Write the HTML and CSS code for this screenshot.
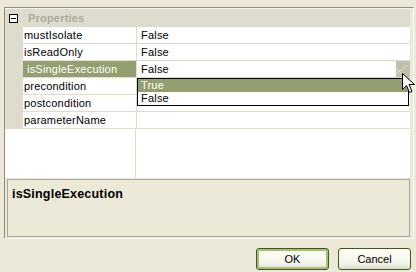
FILE: index.html
```html
<!DOCTYPE html>
<html lang="en">
<head>
    <meta charset="UTF-8">
    <title>Properties</title>
    <link rel="stylesheet" href="styles.css">
</head>
<body>

    <div class="frame">
        <div class="grid">
            <div class="category">
                <span class="expander"></span>
                <span class="category-name">Properties</span>
            </div>

            <div class="row">
                <div class="gutter"></div>
                <div class="name">mustIsolate</div>
                <div class="value">False</div>
            </div>
            <div class="row">
                <div class="gutter"></div>
                <div class="name">isReadOnly</div>
                <div class="value">False</div>
            </div>
            <div class="row selected">
                <div class="gutter"></div>
                <div class="name">isSingleExecution</div>
                <div class="value">
                    <span>False</span>
                    <span class="drop-button"></span>
                </div>
            </div>
            <div class="row">
                <div class="gutter"></div>
                <div class="name">precondition</div>
                <div class="value"></div>
            </div>
            <div class="row">
                <div class="gutter"></div>
                <div class="name">postcondition</div>
                <div class="value"></div>
            </div>
            <div class="row">
                <div class="gutter"></div>
                <div class="name">parameterName</div>
                <div class="value"></div>
            </div>
            <div class="filler">
                <div class="filler-left"></div>
                <div></div>
            </div>

            <!-- liste ouverte sous la valeur -->
            <div class="dropdown">
                <div class="option active">True</div>
                <div class="option">False</div>
            </div>
        </div>

        <div class="description">
            <strong>isSingleExecution</strong>
        </div>
    </div>

    <div class="buttons">
        <button class="btn default">OK</button>
        <button class="btn">Cancel</button>
    </div>

    <svg class="cursor" width="30" height="40" viewBox="0 0 30 40">
        <line x1="2" y1="2" x2="24" y2="24" stroke="#ffffff" stroke-opacity="0.45"/>
        <line x1="22" y1="-6" x2="-18" y2="26" stroke="#ffffff" stroke-opacity="0.45"/>
        <path d="M9.5 8.5 L9.5 24.5 L13.5 20.5 L16.5 27.5 L19 26.5 L16 19.5 L21.5 19.5 Z" fill="#ffffff" stroke="#000000" stroke-width="1"/>
    </svg>

</body>
</html>
```

FILE: styles.css
```css
/* Base */
* {
    margin: 0;
    padding: 0;
    box-sizing: border-box;
}

body {
    font-family: 'Liberation Sans', Arial, sans-serif;
    font-size: 11px;
    letter-spacing: 0.2px;
    color: #000;
    background-color: #ece9d8;
    position: relative;
    width: 416px;
    height: 272px;
    overflow: hidden;
}

/* Cadre de la grille */
.frame {
    margin: 7px 2px 0 4px;
    height: 232px;
    border-top: 1px solid #8d8b7c;
    border-left: 1px solid #8d8b7c;
    border-right: 1px solid #fff;
    border-bottom: 1px solid #fff;
    display: flex;
    flex-direction: column;
}

.grid {
    position: relative;
    height: 170px;
    margin-right: 3px;
    background-color: #fff;
    border-top: 1px solid #f4f3ee;
    display: flex;
    flex-direction: column;
}

.category {
    height: 18px;
    background-color: #dedccd;
    display: flex;
    align-items: center;
}

.expander {
    position: relative;
    width: 9px;
    height: 9px;
    margin-left: 4px;
    border: 1px solid #000;
    background-color: #fff;
}

.expander::after {
    content: "";
    position: absolute;
    left: 1px;
    top: 3px;
    width: 5px;
    height: 1px;
    background-color: #000;
}

.category-name {
    margin-left: 10px;
    font-weight: bold;
    color: #aca899;
}

/* Lignes */
.row {
    display: grid;
    grid-template-columns: 18px 114px 1fr;
    height: 17px;
}

.gutter {
    background-color: #dedccd;
}

.name,
.value {
    line-height: 16px;
    border-bottom: 1px solid #dedccd;
    white-space: nowrap;
}

.name {
    padding-left: 1px;
    border-right: 1px solid #dedccd;
}

.value {
    display: flex;
    padding-left: 4px;
}

.selected .name {
    background-color: #939f6e;
    color: #fff;
    padding-left: 4px;
}

.selected .value span:first-child {
    flex: 1;
}

.drop-button {
    width: 14px;
    height: 16px;
    background-color: #c1c0ae;
}

.filler {
    flex: 1;
    display: grid;
    grid-template-columns: 131px 1fr;
}

.filler-left {
    border-right: 1px solid #dedccd;
}

/* Liste deroulante */
.dropdown {
    position: absolute;
    left: 132px;
    top: 69px;
    width: 272px;
    height: 28px;
    border: 1px solid #000;
    background-color: #fff;
}

.option {
    height: 13px;
    line-height: 13px;
    padding-left: 3px;
}

.option.active {
    background-color: #939f6e;
    color: #fff;
}

/* Description */
.description {
    height: 58px;
    margin: 1px 3px 0 2px;
    border: 1px solid #aca899;
    padding: 7px 0 0 4px;
    font-size: 12.5px;
}

/* Boutons */
.buttons {
    display: flex;
    justify-content: flex-end;
    gap: 9px;
    margin: 9px 5px 0 0;
}

.btn {
    width: 73px;
    height: 22px;
    font-family: 'Liberation Sans', Arial, sans-serif;
    font-size: 11px;
    color: #000;
    border: 1px solid #3d5a1e;
    border-radius: 3px;
    background: linear-gradient(#fffff6, #f4f3ea 75%, #dddbcb);
}

.btn.default {
    box-shadow: inset 0 0 0 2px #a9bc7c;
}

.cursor {
    position: absolute;
    left: 393px;
    top: 65px;
}
```
